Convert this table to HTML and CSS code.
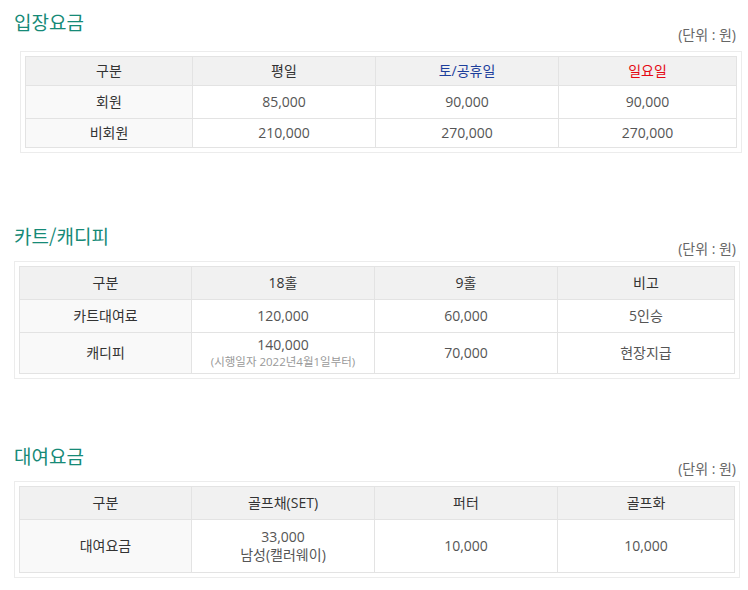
FILE: index.html
```html
<!DOCTYPE html>
<html lang="ko">
<head>
<meta charset="utf-8">
<title>이용요금</title>
<link rel="stylesheet" href="styles.css">
</head>
<body>
<main class="page">
  <section class="fee fee--first">
    <div class="fee-head">
      <h2 class="fee-title">입장요금</h2>
      <p class="fee-unit">(단위 : 원)</p>
    </div>
    <div class="fee-box fee-box--narrow">
      <table class="fee-table fee-table--a">
        <colgroup><col class="col-a1"><col class="col-mid"><col class="col-mid"><col></colgroup>
        <thead>
          <tr class="h29"><th>구분</th><th>평일</th><th class="blue">토/공휴일</th><th class="red">일요일</th></tr>
        </thead>
        <tbody>
          <tr class="h33"><th>회원</th><td>85,000</td><td>90,000</td><td>90,000</td></tr>
          <tr class="h29"><th>비회원</th><td>210,000</td><td>270,000</td><td>270,000</td></tr>
        </tbody>
      </table>
    </div>
  </section>

  <section class="fee fee--second">
    <div class="fee-head">
      <h2 class="fee-title">카트/캐디피</h2>
      <p class="fee-unit">(단위 : 원)</p>
    </div>
    <div class="fee-box">
      <table class="fee-table">
        <colgroup><col class="col-b1"><col class="col-mid"><col class="col-mid"><col></colgroup>
        <thead>
          <tr class="h33"><th>구분</th><th>18홀</th><th>9홀</th><th>비고</th></tr>
        </thead>
        <tbody>
          <tr class="h33"><th>카트대여료</th><td>120,000</td><td>60,000</td><td>5인승</td></tr>
          <tr class="h41"><th>캐디피</th><td class="two">140,000<span class="note">(시행일자 2022년4월1일부터)</span></td><td>70,000</td><td>현장지급</td></tr>
        </tbody>
      </table>
    </div>
  </section>

  <section class="fee fee--third">
    <div class="fee-head">
      <h2 class="fee-title">대여요금</h2>
      <p class="fee-unit">(단위 : 원)</p>
    </div>
    <div class="fee-box">
      <table class="fee-table">
        <colgroup><col class="col-b1"><col class="col-mid"><col class="col-mid"><col></colgroup>
        <thead>
          <tr class="h33"><th>구분</th><th>골프채(SET)</th><th>퍼터</th><th>골프화</th></tr>
        </thead>
        <tbody>
          <tr class="h53"><th>대여요금</th><td class="two tall">33,000<span class="line">남성(캘러웨이)</span></td><td>10,000</td><td>10,000</td></tr>
        </tbody>
      </table>
    </div>
  </section>
</main>
</body>
</html>
```

FILE: styles.css
```css
html, body {
  margin: 0;
  padding: 0;
  background: #ffffff;
}

body {
  font-family: "Open Sans", "Noto Sans CJK KR", sans-serif;
  color: #333333;
}

.page {
  width: 748px;
  box-sizing: border-box;
  padding: 10px 8px 0 14px;
}

.fee--second { margin-top: 71px; }
.fee--third { margin-top: 65px; }

.fee-head {
  display: flex;
  justify-content: space-between;
  height: 33px;
}

.fee-title {
  margin: 0;
  align-self: flex-start;
  font-family: "Noto Sans CJK KR", sans-serif;
  font-size: 19px;
  line-height: 24px;
  font-weight: 400;
  color: #168a77;
  letter-spacing: 0;
}

.fee-unit {
  margin: 0 4px 0 0;
  align-self: flex-end;
  font-size: 14px;
  line-height: 16px;
  color: #666666;
}

.fee-box {
  margin-top: 4px;
  border: 1px solid #ececec;
  padding: 4px;
}

.fee--first .fee-box {
  margin-top: 8px;
}

.fee-box--narrow {
  margin-left: 6px;
  margin-right: -2px;
}

.fee-table {
  width: 100%;
  table-layout: fixed;
  border-collapse: collapse;
  font-size: 14px;
}

.col-a1 { width: 167px; }
.col-b1 { width: 172px; }
.col-mid { width: 183px; }

.fee-table th,
.fee-table td {
  border: 1px solid #e3e3e3;
  padding: 0;
  text-align: center;
  vertical-align: middle;
  font-weight: 400;
  line-height: 18px;
}

.fee-table thead th {
  background: #f1f1f1;
  color: #333333;
}

.fee-table tbody th {
  background: #f9f9f9;
  color: #333333;
}

.fee-table td {
  background: #ffffff;
  color: #555555;
}

.fee-table .blue { color: #1d3f9c; }
.fee-table .red { color: #e50914; }

.h29 { height: 29px; }
.h33 { height: 33px; }
.h41 { height: 41px; }
.h53 { height: 53px; }

.fee-table td.two {
  line-height: 17px;
}

.fee-table td.tall {
  line-height: 18px;
}

.note {
  display: block;
  font-size: 11.5px;
  color: #999999;
}

.line {
  display: block;
}
```
